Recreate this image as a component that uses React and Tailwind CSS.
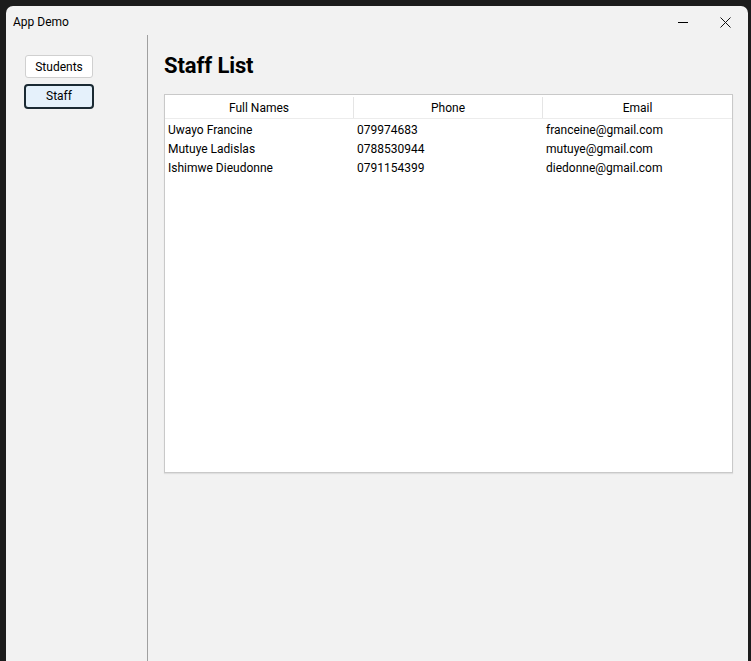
export default function App() {
  const rows = [
    ["Uwayo Francine", "079974683", "franceine@gmail.com"],
    ["Mutuye Ladislas", "0788530944", "mutuye@gmail.com"],
    ["Ishimwe Dieudonne", "0791154399", "diedonne@gmail.com"],
  ];
  return (
    <div
      className="w-[751px] h-[661px] bg-[#1c1c1c] pl-[6px] pt-[6px] pr-[3px] flex overflow-hidden"
      style={{ fontFamily: "Roboto, 'Noto Sans', sans-serif" }}
    >
      <div className="flex-1 bg-[#f2f2f2] rounded-tl-[7px] rounded-tr-[7px] flex flex-col text-black">
        {/* title bar */}
        <div className="h-[29px] flex items-center pl-[7px] shrink-0">
          <span className="text-[12px] mt-[3px]">App Demo</span>
          <div className="ml-auto flex items-center h-full">
            <div className="w-[46px] h-full flex items-center justify-center">
              <div className="w-[10px] h-px bg-black mt-[3px]" />
            </div>
            <div className="w-[38px] h-full flex items-center justify-center mr-[4px]">
              <svg width="11" height="11" viewBox="0 0 11 11" className="mt-[3px]">
                <path d="M0.5 0.5 L10.5 10.5 M10.5 0.5 L0.5 10.5" stroke="#111" strokeWidth="1" />
              </svg>
            </div>
          </div>
        </div>
        <div className="flex flex-1">
          {/* sidebar */}
          <div className="w-[142px] shrink-0 border-r border-[#a0a0a0] pl-[18px] pt-[20px] flex flex-col items-start">
            <button className="ml-[1px] w-[68px] h-[23px] bg-white border border-[#d0d0d0] rounded-[3px] text-[12px] flex items-center justify-center">
              Students
            </button>
            <button className="mt-[6px] w-[70px] h-[25px] bg-[#e5f1fb] border-2 border-[#1b2a33] rounded-[4px] text-[12px] flex items-center justify-center pb-[1px]">
              Staff
            </button>
          </div>
          {/* main */}
          <div className="flex-1 pl-[16px] pr-[15px] pt-[16px] flex flex-col">
            <h1 className="text-[22px] font-bold leading-[30px] tracking-[-0.1px]">Staff List</h1>
            <div className="mt-[13px] h-[379px] bg-white border border-[#c9c9c9] shadow-[0_1px_1px_rgba(0,0,0,0.08)] text-[12px]">
              <div className="grid grid-cols-3 h-[24px] border-b border-[#ececec] pt-[2px]">
                <div className="flex items-center justify-center border-r border-[#e5e5e5]">Full Names</div>
                <div className="flex items-center justify-center border-r border-[#e5e5e5]">Phone</div>
                <div className="flex items-center justify-center">Email</div>
              </div>
              <div className="pt-[1px]">
                {rows.map((r, i) => (
                  <div key={i} className="grid grid-cols-3 h-[19px] items-center">
                    <div className="pl-[3px]">{r[0]}</div>
                    <div className="pl-[3px]">{r[1]}</div>
                    <div className="pl-[3px]">{r[2]}</div>
                  </div>
                ))}
              </div>
            </div>
          </div>
        </div>
      </div>
    </div>
  );
}
